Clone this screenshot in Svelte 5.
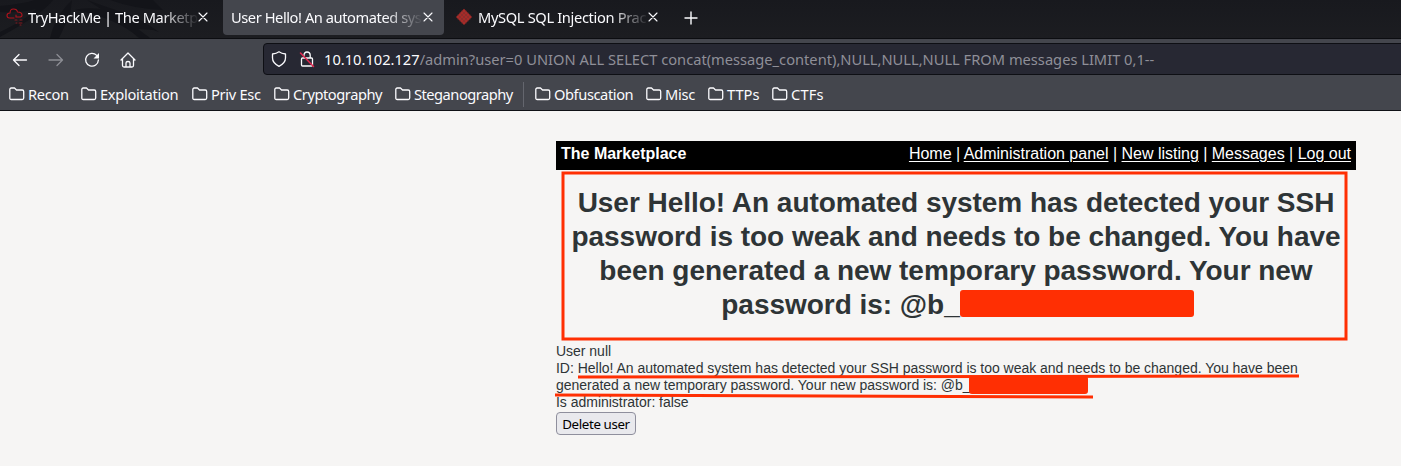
<script>
  const bookmarks = [
    { name: 'Recon', width: 72, spacing: -0.3 },
    { name: 'Exploitation', width: 111, spacing: -0.3 },
    { name: 'Priv Esc', width: 82, spacing: -0.3 },
    { name: 'Cryptography', width: 121, spacing: -0.45 },
    { name: 'Steganography', width: 129, spacing: -0.5, last: true },
    { name: 'Obfuscation', width: 111, spacing: -0.42 },
    { name: 'Misc', width: 62, spacing: -0.3 },
    { name: 'TTPs', width: 64, spacing: 0 },
    { name: 'CTFs', width: 60, spacing: 0.15 }
  ];
  const links = ['Home', 'Administration panel', 'New listing', 'Messages', 'Log out'];
</script>

{#snippet close()}
  <svg class="close" width="10" height="10" viewBox="0 0 10 10"><path d="M1 1l8 8M9 1L1 9" /></svg>
{/snippet}

<div class="browser">
  <div class="tabs">
    <svg class="dragon" width="230" height="39" viewBox="0 0 230 39">
      <path d="M0 6Q22 4 35 0h18Q44 13 0 37v-5Q27 19 36 9 20 13 0 12zM87 0q22 8 38 13 18 7 34 19l-6-2-15-1 12 9h-11q-22-20-64-28 9-3 26-1zM50 38Q54 20 67 5l5-5-2 15-11 23zM110 0q25 9 53 10l-10-10z" />
    </svg>
    <div class="tab first">
      <svg width="18" height="18" viewBox="0 0 18 18">
        <path d="M8 10H3.500Q1 10 1 7.500T4 5Q4 1 7.500 1T11.500 4Q16 4 16 7.200 16 9 13.500 9H10V7" />
        <path class="bits" d="M9 12h2m3 0h2M10 15h1m2 0h3M14 17h1" />
      </svg>
      <span class="label fade">TryHackMe | The Marketpl</span>{@render close()}
    </div>
    <div class="tab active"><span class="label fade">User Hello! An automated sys</span>{@render close()}</div>
    <div class="tab third">
      <svg width="16" height="18" viewBox="0 0 16 18"><path d="M8 .8L16 9 8 17 0 9z" fill="#a72b28" /><path class="weave" d="M4 5l8 8M2 7l8 8M6 3l8 8M4 13l8-8M2 11l8-8M6 15l8-8" /></svg>
      <span class="label fade">MySQL SQL Injection Prac</span>{@render close()}
    </div>
    <svg class="plus" width="12" height="12" viewBox="0 0 12 12"><path d="M6 0v12M0 6h12" /></svg>
  </div>

  <div class="navbar">
    <div class="controls">
      <svg width="16" height="16" viewBox="0 0 16 16"><path d="M14.500 8H1.500M7 2.500L1.500 8 7 13.500" /></svg>
      <svg class="dim" width="16" height="16" viewBox="0 0 16 16"><path d="M1 8h13.500M9 2.500L14.500 8 9 13.500" /></svg>
      <svg width="16" height="16" viewBox="0 0 16 16"><path d="M12.700 3.400A6.400 6.400 0 1 0 14.400 8" /><path d="M15 1v5.500H9.500z" fill="#fbfbfe" stroke="none" /></svg>
      <svg width="16" height="16" viewBox="0 0 16 16"><path d="M1 8l7-7 7 7M2.500 7v6.500q0 1.500 1.500 1.500h8q1.500 0 1.500-1.500V7M6 15v-4q0-1.500 2-1.500t2 1.500v4" /></svg>
    </div>
    <div class="address">
      <svg width="16" height="16" viewBox="0 0 16 16"><path d="M8 .8Q10.500 2.700 14.500 3V7q0 5-6.500 8.300Q1.500 12 1.500 7V3Q5.500 2.700 8 .8z" /></svg>
      <svg class="lock" width="16" height="16" viewBox="0 0 16 16"><path d="M5 4.500Q5 1 8 1t3.200 3v3M3.500 7h9q1 0 1 1v6q0 1-1 1h-9q-1 0-1-1V8q0-1 1-1z" /><path d="M1.500 2l13 13.500" stroke="#e22850" stroke-width="1.500" /></svg>
      <span class="url"><b>10.10.102.127</b>/admin?user=0 UNION ALL SELECT concat(message_content),NULL,NULL,NULL FROM messages LIMIT 0,1--</span>
    </div>
  </div>

  <div class="bookmarks">
    {#each bookmarks as item}
      <div class="bookmark" class:last={item.last} style="width: {item.width}px">
        <svg width="16" height="16" viewBox="0 0 16 16"><path d="M.8 12V3.500Q.8 2 2.300 2H5.500L7.500 4h5.700q1.500 0 1.500 1.500V12q0 1.500-1.500 1.500H2.300Q.8 13.500.8 12z" /></svg>
        <span style="letter-spacing: {item.spacing}px">{item.name}</span>
      </div>
    {/each}
  </div>
</div>

<main>
  <header>
    <strong>The Marketplace</strong>
    <nav>{#each links as link, i}{#if i}<span>{' | '}</span>{/if}<a href="#top">{link}</a>{/each}</nav>
  </header>
  <h1>
    <span>User Hello! An automated system has detected your SSH</span>
    <span>password is too weak and needs to be changed. You have</span>
    <span>been generated a new temporary password. Your new</span>
    <span>password is: @b_<i class="redacted"></i></span>
  </h1>
  <div class="details">
    <div>User null</div>
    <div>ID: Hello! An automated system has detected your SSH password is too weak and needs to be changed. You have been</div>
    <div>generated a new temporary password. Your new password is: @b_<i class="redacted small"></i></div>
    <div>Is administrator: false</div>
  </div>
  <button>Delete user</button>
  <svg class="marks" width="800" height="300" viewBox="0 0 800 300">
    <rect x="7" y="32" width="783" height="166" />
    <path d="M22 236L743 235M-1 254L537 256" />
  </svg>
</main>

<style>
  :global(body) { background: #f6f5f4; }
  .browser { width: 1401px; height: 111px; background: #44464d; color: #fbfbfe; font: 14.67px/20px "Noto Sans", sans-serif; box-sizing: border-box; border-bottom: 1px solid #101116; overflow: hidden; }
  svg { flex: none; overflow: visible; fill: none; stroke: #fbfbfe; stroke-width: 1.3; stroke-linejoin: round; stroke-linecap: round; }
  .tabs { height: 39px; display: flex; align-items: flex-start; background: linear-gradient(#18191e, #1c1d21); border-bottom: 1px solid #0c0d11; box-sizing: border-box; position: relative; }
  .dragon { position: absolute; left: 0; top: 0; fill: #131419; stroke: none; }
  .tab { display: flex; align-items: center; height: 35px; padding-bottom: 1px; box-sizing: border-box; position: relative; white-space: nowrap; }
  .first { width: 223px; padding-left: 6px; }
  .first svg:first-child { stroke: #b1131d; stroke-width: 1.1; }
  .first .bits { stroke: #861a21; }
  .first .label { width: 171px; margin-left: 4px; letter-spacing: -.42px; }
  .active { width: 221px; padding-left: 8px; background: #44464d; border-radius: 0 0 4px 4px; }
  .active .label { width: 192px; letter-spacing: -.44px; }
  .third { width: 241px; padding-left: 12px; }
  .third svg:first-child { stroke: none; }
  .third .weave { stroke: #7a302f; stroke-width: .6; }
  .third .label { width: 171px; margin-left: 6px; letter-spacing: -.35px; }
  .third .close { margin-left: -1px; }
  .label { flex: none; }
  .fade { mask-image: linear-gradient(to right, #000 calc(100% - 38px), transparent); }
  .close { stroke-width: 1.1; }
  .first .close { margin-left: -1px; }
  .plus { margin: 12px 0 0; stroke-width: 1.4; }
  .navbar { height: 41px; display: flex; align-items: center; }
  .controls { width: 263px; flex: none; padding-left: 12px; box-sizing: border-box; display: flex; gap: 20px; }
  .dim { opacity: .4; }
  .address { width: 1150px; height: 32px; margin-bottom: 1px; flex: none; background: #272833; border: 1px solid #0e0f14; border-radius: 4px; box-sizing: border-box; display: flex; align-items: center; padding-left: 7px; }
  .lock { margin-left: 12px; }
  .url { color: #8f8f98; margin-left: 9px; white-space: pre; }
  .url b { color: #fbfbfe; font-weight: 400; }
  .bookmarks { height: 30px; padding: 0 0 1px 9px; box-sizing: border-box; display: flex; align-items: center; }
  .bookmark { display: flex; align-items: center; gap: 3px; box-sizing: border-box; flex: none; height: 25px; white-space: nowrap; }
  .bookmark span { padding-bottom: 2px; }
  .bookmark svg { margin-bottom: 1px; }
  .bookmark.last { border-right: 1px solid #64666e; margin-right: 11px; }
  main { position: relative; width: 800px; margin: 30px 0 0 556px; color: #2e3436; font-family: "Liberation Sans", sans-serif; }
  header { height: 29px; box-sizing: border-box; padding: 3px 5px; display: flex; justify-content: space-between; background: #000; color: #fff; font-size: 16px; line-height: 19px; }
  nav { white-space: pre; letter-spacing: -.01px; }
  a { color: #fff; text-decoration: underline; text-underline-offset: 2px; }
  h1 { font-size: 28px; line-height: 34px; font-weight: 700; letter-spacing: -.03px; margin: 16px 0 21px; text-align: center; }
  h1 span { display: block; height: 34px; white-space: nowrap; }
  h1 span:last-child { padding-left: 3px; }
  .redacted { display: inline-block; width: 234px; height: 27px; background: #ff2f03; border-radius: 3px; vertical-align: -3px; }
  .small { width: 119px; height: 18px; vertical-align: -4px; margin: -4px 0 0 -2px; }
  .details { font-size: 14px; line-height: 17px; letter-spacing: -.02px; white-space: nowrap; }
  .details > div { height: 17px; }
  button { display: block; width: 80px; height: 23px; padding: 0; margin-top: 1px; border: 1px solid #8f8f9d; border-radius: 4px; background: #e9e9ed; color: #000; font: 13.33px/20px "Noto Sans", sans-serif; letter-spacing: -.38px; }
  .marks { position: absolute; left: 0; top: 0; stroke: #ff2f03; stroke-width: 3; stroke-linejoin: miter; stroke-linecap: butt; pointer-events: none; }
</style>
